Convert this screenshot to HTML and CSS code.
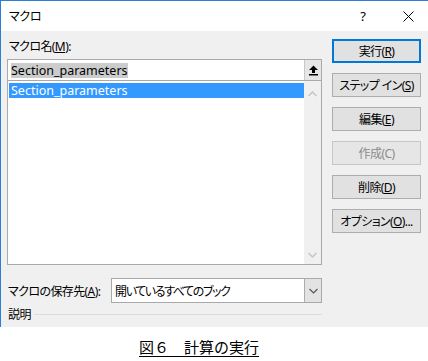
FILE: index.html
```html
<!DOCTYPE html>
<html lang="ja">
<head>
<meta charset="utf-8">
<title>マクロ</title>
<link rel="stylesheet" href="styles.css">
</head>
<body>
<div class="dialog">
  <div class="titlebar">
    <span class="title">マクロ</span>
    <span class="help">?</span>
    <span class="close"><svg width="11" height="11" viewBox="0 0 11 11"><path d="M0.5 0.5L10.5 10.5M10.5 0.5L0.5 10.5" stroke="#000" stroke-width="1" fill="none"/></svg></span>
  </div>
  <div class="content">
    <div class="main">
      <div class="left">
        <div class="label jp">マクロ名(<u>M</u>):</div>
        <div class="namebox">
          <span class="sel">Section_parameters</span>
          <span class="upbtn"><svg width="11" height="11" viewBox="0 0 11 11"><path d="M5.5 0.5L10 5H7V8H4V5H1Z" fill="#000"/><rect x="1" y="9" width="9" height="1.5" fill="#000"/></svg></span>
        </div>
        <div class="listbox">
          <div class="items">
            <div class="item selected">Section_parameters</div>
          </div>
          <div class="scrollbar">
            <svg width="9" height="6" viewBox="0 0 9 6"><path d="M0.5 5L4.5 1L8.5 5" stroke="#c4c4c4" stroke-width="1.4" fill="none"/></svg>
            <svg width="9" height="6" viewBox="0 0 9 6"><path d="M0.5 1L4.5 5L8.5 1" stroke="#c4c4c4" stroke-width="1.4" fill="none"/></svg>
          </div>
        </div>
      </div>
      <div class="buttons">
        <div class="btn default">実行(<u>R</u>)</div>
        <div class="btn">ステップ イン(<u>S</u>)</div>
        <div class="btn">編集(<u>E</u>)</div>
        <div class="btn disabled">作成(C)</div>
        <div class="btn">削除(<u>D</u>)</div>
        <div class="btn">オプション(<u>O</u>)...</div>
      </div>
    </div>
    <div class="saverow">
      <span class="savelabel jp">マクロの保存先(<u>A</u>):</span>
      <div class="combo">
        <span class="combotext">開いているすべてのブック</span>
        <span class="drop"><svg width="9" height="6" viewBox="0 0 9 6"><path d="M0.5 1L4.5 5L8.5 1" stroke="#555" stroke-width="1.1" fill="none"/></svg></span>
      </div>
    </div>
    <div class="desc jp">
      <span>説明</span>
      <span class="rule"></span>
    </div>
  </div>
</div>
<div class="caption"><u>図６　計算の実行</u></div>
</body>
</html>
```
FILE: styles.css
```css
* { box-sizing: border-box; }
html, body { margin: 0; padding: 0; background: #fff; }
body {
  font-family: "Noto Sans", "Noto Sans CJK JP", sans-serif;
  font-size: 12px;
  color: #000;
  font-feature-settings: "palt";
}
u { text-underline-offset: 1px; }
.jp { letter-spacing: -0.6px; }
.dialog {
  width: 428px;
  height: 327px;
  border-top: 1px solid #2b7fd4;
  border-left: 1px solid #2b7fd4;
  background: #f0f0f0;
}
.titlebar {
  height: 30px;
  background: #fff;
  display: flex;
  align-items: center;
  padding-left: 8px;
}
.title { flex: 1; font-size: 12px; letter-spacing: -0.3px; }
.help { width: 14px; margin-right: 33px; font-size: 13px; text-align: center; }
.close { width: 11px; margin-right: 14px; display: flex; }
.content { padding: 8px 0 0 6px; }
.main { display: flex; }
.left { width: 315px; }
.label { height: 16px; line-height: 16px; margin-bottom: 4px; padding-left: 2px; }
.namebox {
  height: 22px;
  background: #fff;
  border: 1px solid #a9a9a9;
  display: flex;
  align-items: center;
  padding-left: 3px;
}
.sel { background: #cccccc; line-height: 15px; height: 15px; flex: none; font-size: 12.5px; }
.upbtn {
  margin-left: auto;
  width: 17px;
  height: 20px;
  background: #e6e6e6;
  border-left: 1px solid #c8c8c8;
  display: flex;
  align-items: center;
  justify-content: center;
}
.listbox {
  height: 184px;
  background: #fff;
  border: 1px solid #a9a9a9;
  border-top: 0;
  display: flex;
  padding: 1px 0 0 1px;
}
.items { flex: 1; padding-top: 1px; }
.item { height: 15px; line-height: 15px; padding-left: 2px; font-size: 12.5px; }
.item.selected { background: #3399ff; color: #fff; }
.scrollbar {
  width: 17px;
  background: #f0f0f0;
  display: flex;
  flex-direction: column;
  align-items: center;
  justify-content: space-between;
  padding: 10px 0 6px;
  margin-top: -1px;
}
.buttons { margin-left: 10px; width: 89px; display: flex; flex-direction: column; gap: 10px; }
.btn {
  height: 24px;
  background: #e1e1e1;
  border: 1px solid #adadad;
  display: flex;
  align-items: center;
  justify-content: center;
  letter-spacing: -0.6px;
}
.btn.default { border: 2px solid #0078d7; }
.btn.disabled { color: #8a8a8a; border-color: #c6c6c6; background: #e6e6e6; }
.saverow { display: flex; align-items: center; margin-top: 13px; }
.savelabel { width: 104px; padding-left: 1px; }
.combo {
  width: 211px;
  height: 25px;
  background: #fff;
  border: 1px solid #a9a9a9;
  display: flex;
  align-items: center;
  padding-left: 3px;
}
.combotext { flex: 1; letter-spacing: -1.4px; }
.drop {
  width: 17px;
  height: 23px;
  background: #e3e3e3;
  border-left: 1px solid #adadad;
  display: flex;
  align-items: center;
  justify-content: center;
}
.desc { display: flex; align-items: center; margin-top: 3px; height: 16px; padding-left: 1px; }
.rule { width: 288px; height: 1px; background: #dcdcdc; margin-left: 3px; }
.caption {
  padding-left: 139px;
  margin-top: 10px;
  font-family: "Noto Sans CJK JP", sans-serif;
  font-feature-settings: normal;
  font-size: 15px;
  line-height: 20px;
}
.caption u { text-underline-offset: 3px; }
```
